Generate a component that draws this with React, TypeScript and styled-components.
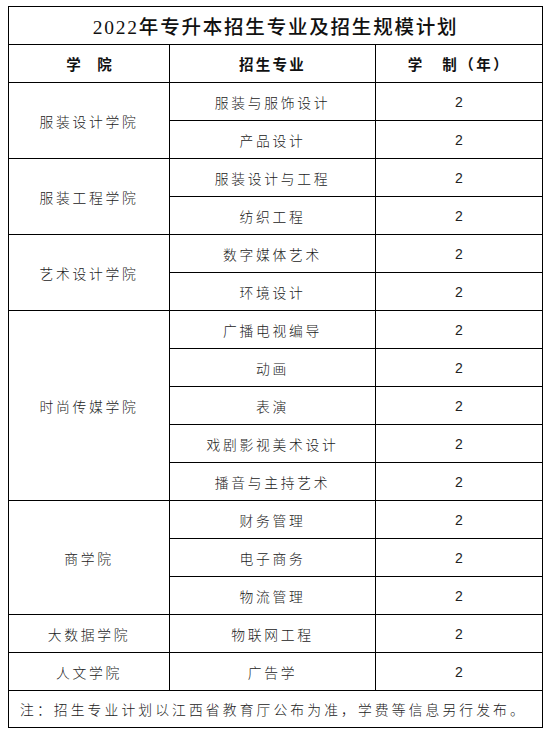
import styled, { createGlobalStyle } from "styled-components";

const GlobalStyle = createGlobalStyle`
  html, body {
    margin: 0;
    padding: 0;
    background: #ffffff;
  }
  body {
    font-family: "Noto Sans CJK SC", "Liberation Sans", sans-serif;
    color: #222;
  }
`;

const Page = styled.div`
  padding: 6px 0 0 8px;
`;

const Table = styled.table`
  border-collapse: collapse;
  table-layout: fixed;
  width: 534px;

  td, th {
    border: 1px solid #000;
    padding: 0;
    text-align: center;
    vertical-align: middle;
  }
`;

const TitleCell = styled.th`
  height: 37px;
  font-family: "Liberation Serif", "Noto Sans CJK SC", serif;
  font-size: 19.5px;
  font-weight: 500;
  color: #111;
  letter-spacing: 1.8px;
`;

const HeadCell = styled.th<{ $spacing: number }>`
  height: 37px;
  font-size: 14.5px;
  font-weight: 700;
  color: #111;
  letter-spacing: ${(p) => p.$spacing}px;
  white-space: pre;
`;

const Cell = styled.td<{ $num?: boolean }>`
  height: 37px;
  font-family: ${(p) =>
    p.$num
      ? `"Liberation Sans", Arial, sans-serif`
      : `"Noto Sans CJK SC", sans-serif`};
  font-size: ${(p) => (p.$num ? "14px" : "13.8px")};
  font-weight: 300;
  letter-spacing: ${(p) => (p.$num ? "0" : "2.7px")};
  color: #222;
`;

const NoteCell = styled.td`
  height: 36px;
  text-align: left !important;
  padding-left: 11px !important;
  font-size: 13.8px;
  font-weight: 300;
  letter-spacing: 3.1px;
  color: #222;
  white-space: nowrap;
`;

const colleges: { name: string; majors: string[] }[] = [
  { name: "服装设计学院", majors: ["服装与服饰设计", "产品设计"] },
  { name: "服装工程学院", majors: ["服装设计与工程", "纺织工程"] },
  { name: "艺术设计学院", majors: ["数字媒体艺术", "环境设计"] },
  {
    name: "时尚传媒学院",
    majors: ["广播电视编导", "动画", "表演", "戏剧影视美术设计", "播音与主持艺术"],
  },
  { name: "商学院", majors: ["财务管理", "电子商务", "物流管理"] },
  { name: "大数据学院", majors: ["物联网工程"] },
  { name: "人文学院", majors: ["广告学"] },
];

export default function App() {
  return (
    <>
      <GlobalStyle />
      <Page>
        <Table>
          <colgroup>
            <col style={{ width: 161 }} />
            <col style={{ width: 206 }} />
            <col style={{ width: 167 }} />
          </colgroup>
          <thead>
            <tr>
              <TitleCell colSpan={3}>2022年专升本招生专业及招生规模计划</TitleCell>
            </tr>
            <tr>
              <HeadCell $spacing={0}>学{"     "}院</HeadCell>
              <HeadCell $spacing={2.2}>招生专业</HeadCell>
              <HeadCell $spacing={2.5}>学{"   "}制（年）</HeadCell>
            </tr>
          </thead>
          <tbody>
            {colleges.map((c) =>
              c.majors.map((m, i) => (
                <tr key={c.name + m}>
                  {i === 0 && <Cell rowSpan={c.majors.length}>{c.name}</Cell>}
                  <Cell>{m}</Cell>
                  <Cell $num>2</Cell>
                </tr>
              ))
            )}
            <tr>
              <NoteCell colSpan={3}>
                注：招生专业计划以江西省教育厅公布为准，学费等信息另行发布。
              </NoteCell>
            </tr>
          </tbody>
        </Table>
      </Page>
    </>
  );
}
